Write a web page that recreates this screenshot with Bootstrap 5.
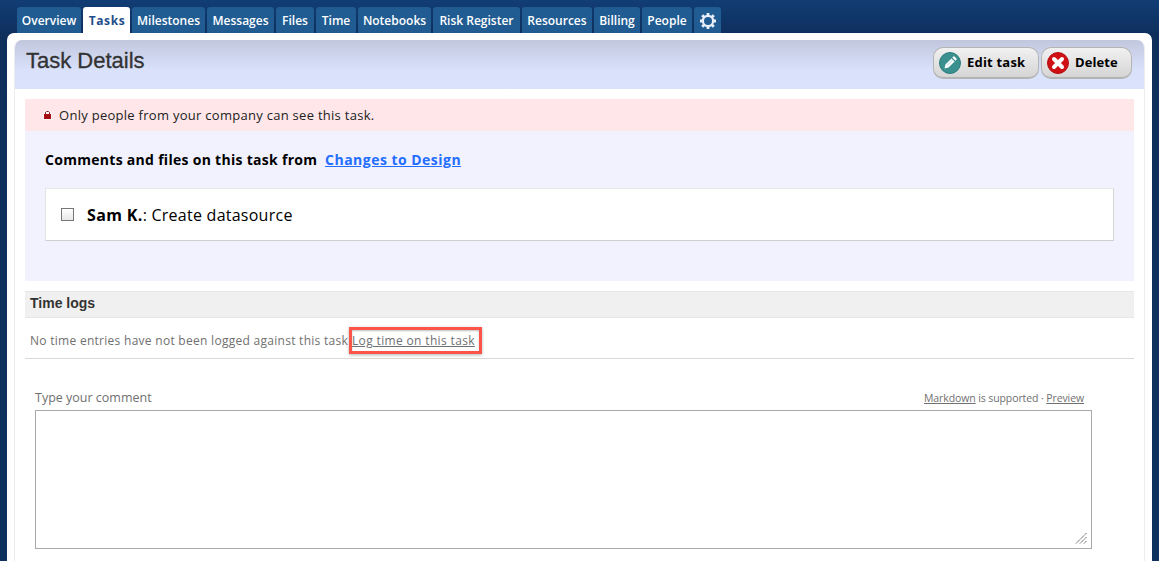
<!DOCTYPE html>
<html lang="en">
<head>
<meta charset="utf-8">
<meta name="viewport" content="width=device-width, initial-scale=1">
<title>Task Details</title>
<link href="https://cdn.jsdelivr.net/npm/bootstrap@5.3.0/dist/css/bootstrap.min.css" rel="stylesheet">
<style>
body{font-family:"Open Sans","Noto Sans",sans-serif;font-size:13px;line-height:18px;color:#000;height:561px;overflow:hidden;padding:7px 7px 0;background:linear-gradient(#113d75,#0e2f5c 34px,#0e305d)}
.main-tabs{padding-left:10px;gap:2px;height:26px;border:0;flex-wrap:nowrap}
.main-tabs .nav-link{height:26px;padding:0;margin:0;border:0;border-radius:3px 3px 0 0;background:#205c92;color:#fff;font-weight:600;font-size:12px;line-height:27px;text-align:center;white-space:nowrap}
.main-tabs .nav-link.active{background:#fff;color:#1f4e8c;font-weight:700;letter-spacing:.6px;padding-left:1px}
.shell{background:#fff;border-radius:7px 7px 0 0;padding:7px 7px 0;height:528px}
.inner{border:1px solid #ececec;border-width:0 1px;border-radius:8px 8px 0 0;height:521px;overflow:hidden}
.title-bar{height:49px;margin:0 -1px;padding:7px 13px 0 12px;background:linear-gradient(#c1c7dd,#d9e1fb 30px,#dae2fc)}
.title-bar h1{font:22px/28px "Liberation Sans",Arial,sans-serif;color:#333;-webkit-text-stroke:.3px #333}
.action{height:32px;padding:0 12px 0 5px;gap:6px;border:1px solid #b4b4b4;border-width:1px 1px 2px;border-radius:10px;background:linear-gradient(#f1f1f1,#d5d5d5);font-size:13px;font-weight:700;color:#000}
.body-area{padding:10px 10px 0}
.notice{height:32px;padding:1px 0 0 18px;background:#ffe6e9;color:#222}
.notice-text{margin:-2px 0 0 7px;letter-spacing:.28px}
.task-area{height:150px;background:#f2f2ff;padding:20px 20px 0}
.task-area h2{font-size:14px;font-weight:700;line-height:18px;margin:0 0 19px;letter-spacing:.29px}
.task-area h2 a{color:#246eff;margin-left:3.8px;letter-spacing:.48px}
.task-item{height:53px;border:1px solid;border-color:#e8e8e8 #d6d6d6 #d0d0d0 #e4e4e4;border-radius:0;padding:0 15px;font-size:16px}
.task-text{letter-spacing:.25px}
.task-text b{letter-spacing:.35px}
.tick-box{width:13px;height:13px;border:1px solid #777;background:linear-gradient(#fff,#e8e8e8);margin-right:13px}
.log-head{height:27px;margin-top:10px;border:1px solid #e6e6e6;border-width:1px 0;background:#f0f0f0;padding:0 5px;font:bold 14px/23px "Liberation Sans",Arial,sans-serif;color:#333}
.log-row{height:41px;padding:9px 5px 0;border-bottom:1px solid #d9d9d9;font-size:12px;color:#707070}
.log-text{line-height:27px;width:319px;white-space:nowrap;letter-spacing:.28px}
.log-row a,.hint a{color:#707070}
.marked{height:27px;width:133px;border:3px solid #fa5548;line-height:20px;padding-top:1px;letter-spacing:.35px;white-space:nowrap;box-shadow:0 1px 3px rgba(0,0,0,.3),inset 0 1px 2px rgba(0,0,0,.25)}
.comment{margin:30px 42px 0 10px}
.comment label{font-size:12.5px;color:#707070}
.hint{font-size:10.5px;letter-spacing:-.1px;color:#707070;padding-right:8px}
.comment textarea{height:139px;border:1px solid #a9a9a9;border-radius:0;resize:none;margin-top:3px}
.grip{position:absolute;right:5px;bottom:5px}
</style>
</head>
<body>
<nav class="nav nav-tabs main-tabs">
<a class="nav-link" style="width:64px" href="#">Overview</a>
<a class="nav-link active" style="width:47px" href="#">Tasks</a>
<a class="nav-link" style="width:73px" href="#">Milestones</a>
<a class="nav-link" style="width:67px" href="#">Messages</a>
<a class="nav-link" style="width:38px" href="#">Files</a>
<a class="nav-link" style="width:40px" href="#">Time</a>
<a class="nav-link" style="width:73px" href="#">Notebooks</a>
<a class="nav-link" style="width:87px" href="#">Risk Register</a>
<a class="nav-link" style="width:70px" href="#">Resources</a>
<a class="nav-link" style="width:46px" href="#">Billing</a>
<a class="nav-link" style="width:50px" href="#">People</a>
<a class="nav-link d-flex align-items-center justify-content-center" style="width:27px" href="#" aria-label="Settings">
<svg width="16" height="16" viewBox="-8 -8 16 16" stroke="#eaf0fa" fill="none" style="margin-top:2px"><circle r="5.1" stroke-width="2.2"/><g stroke-width="2.8"><path d="M0-5.5V-8M0 5.5V8M-5.5 0H-8M5.5 0H8M-4-4L-5.8-5.8M4-4L5.8-5.8M-4 4L-5.8 5.8M4 4L5.8 5.8"/></g></svg></a>
</nav>
<main class="shell">
<div class="inner">
<header class="title-bar d-flex justify-content-between">
<h1 class="m-0">Task Details</h1>
<div class="d-flex" style="gap:2px">
<button class="btn action d-flex align-items-center" style="width:106px"><svg width="22" height="22" viewBox="0 0 22 22"><circle cx="11" cy="11" r="10.5" fill="#39908e" stroke="#2c7d7c"/><path d="M5.5 16.5l.9-4 6.1-6.1 3.1 3.1-6.1 6.1zM13.3 5.6l1-1q.6-.5 1.2 0l1.9 1.9q.5.6 0 1.2l-1 1z" fill="#fff"/><path d="M8 13.5l5.5-5.5" stroke="#8fc4c3" stroke-width=".7"/></svg><span class="text-nowrap" style="letter-spacing:.2px">Edit task</span></button>
<button class="btn action d-flex align-items-center" style="width:91px"><svg width="22" height="22" viewBox="0 0 22 22"><circle cx="11" cy="11" r="10.5" fill="#cf1116" stroke="#b60f12"/><path d="M7 7l8 8M15 7l-8 8" stroke="#fff" stroke-width="4" stroke-linecap="round"/></svg><span style="letter-spacing:.1px">Delete</span></button>
</div>
</header>
<div class="body-area">
<div class="notice d-flex align-items-center"><svg width="9" height="10" viewBox="0 0 9 10" style="margin-top:-2px"><path d="M.5 3.5h1V1.5l1.5-1h3l1.5 1v2h1v6h-8z" fill="#fff"/><path d="M1 4h7v5H1z" fill="#a40f0f"/><path d="M2.5 4V2.3L3.5 1.5h2l1 .8V4" fill="none" stroke="#8b2020"/></svg><span class="notice-text">Only people from your company can see this task.</span></div>
<section class="task-area">
<h2>Comments and files on this task from <a href="#">Changes to Design</a></h2>
<div class="task-item bg-white d-flex align-items-center"><span class="tick-box" role="checkbox" aria-checked="false"></span><span class="task-text"><b>Sam K.</b>: Create datasource</span></div>
</section>
<h3 class="log-head mb-0">Time logs</h3>
<div class="log-row d-flex"><span class="log-text">No time entries have not been logged against this task</span><span class="marked"><a href="#">Log time on this task</a></span></div>
<section class="comment">
<div class="d-flex justify-content-between align-items-center"><label for="c">Type your comment</label><span class="hint"><a href="#">Markdown</a> is supported · <a href="#">Preview</a></span></div>
<div class="position-relative"><textarea id="c" class="form-control"></textarea><svg class="grip" width="12" height="12" viewBox="0 0 12 12"><path d="M1 11.5L11.5 1M5 11.5L11.5 5M9 11.5L11.5 9" stroke="#555" fill="none" stroke-dasharray="1.4 .5"/></svg></div>
</section>
</div>
</div>
</main>
<script src="https://cdn.jsdelivr.net/npm/bootstrap@5.3.0/dist/js/bootstrap.bundle.min.js"></script>
</body>
</html>
